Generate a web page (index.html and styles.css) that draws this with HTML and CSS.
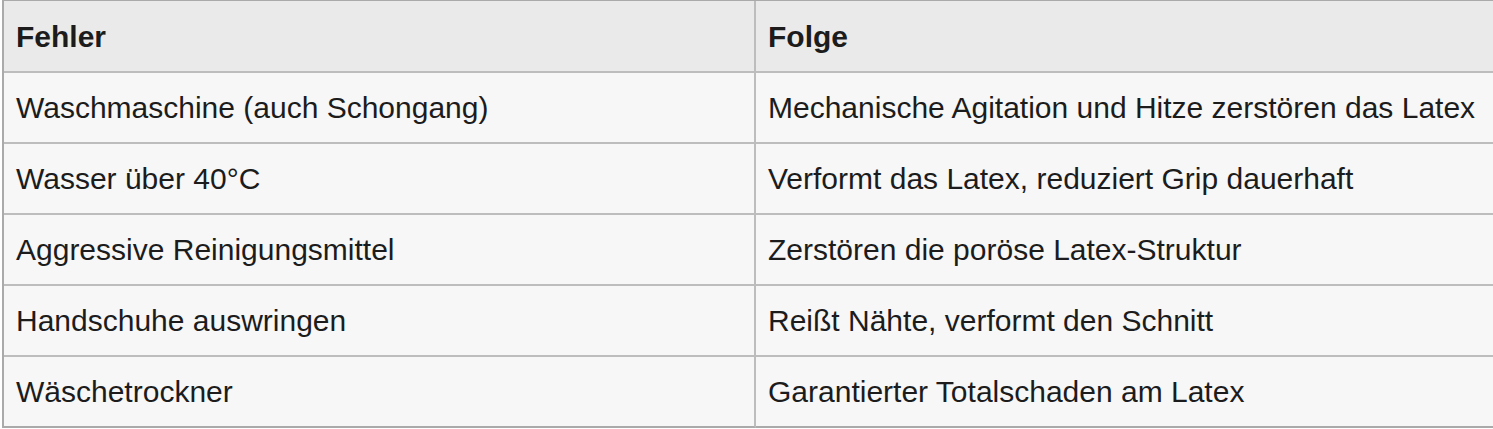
FILE: index.html
```html
<!DOCTYPE html>
<html lang="de">
<head>
<meta charset="utf-8">
<title>Fehler und Folgen</title>
<link rel="stylesheet" href="styles.css">
</head>
<body>
<table class="errors">
  <thead>
    <tr>
      <th class="col-a">Fehler</th>
      <th class="col-b">Folge</th>
    </tr>
  </thead>
  <tbody>
    <tr><td>Waschmaschine (auch Schongang)</td><td>Mechanische Agitation und Hitze zerstören das Latex</td></tr>
    <tr><td>Wasser über 40°C</td><td>Verformt das Latex, reduziert Grip dauerhaft</td></tr>
    <tr><td>Aggressive Reinigungsmittel</td><td>Zerstören die poröse Latex-Struktur</td></tr>
    <tr><td>Handschuhe auswringen</td><td>Reißt Nähte, verformt den Schnitt</td></tr>
    <tr class="last"><td>Wäschetrockner</td><td>Garantierter Totalschaden am Latex</td></tr>
  </tbody>
</table>
</body>
</html>
```

FILE: styles.css
```css
html, body {
  margin: 0;
  padding: 0;
  background: #ffffff;
  overflow: hidden;
}

.errors {
  border-collapse: separate;
  border-spacing: 0;
  table-layout: fixed;
  width: 1508px;
  margin: -1px 0 0 2px;
  border-top: 2px solid #aaaaaa;
  border-left: 2px solid #aaaaaa;
  font-family: "Liberation Sans", Helvetica, Arial, sans-serif;
  font-size: 30px;
  line-height: 35px;
  color: #1c1c1c;
}

.errors th,
.errors td {
  box-sizing: border-box;
  text-align: left;
  vertical-align: middle;
  padding: 17px 12px;
  border-right: 2px solid #bdbdbd;
  border-bottom: 2px solid #bdbdbd;
  white-space: nowrap;
}

.errors th {
  background: #eaeaea;
  font-weight: bold;
  padding-top: 18px;
  padding-bottom: 17px;
}

.errors .col-a {
  width: 752px;
}

.errors td {
  background: #f7f7f7;
  font-weight: normal;
}

.errors .last td {
  border-bottom-color: #aaaaaa;
}
```
